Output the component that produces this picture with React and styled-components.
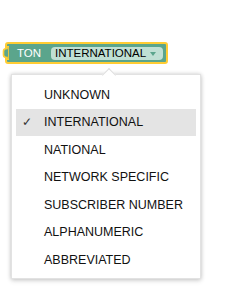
import React from 'react'
import styled, { createGlobalStyle } from 'styled-components'

const options = [
  'UNKNOWN',
  'INTERNATIONAL',
  'NATIONAL',
  'NETWORK SPECIFIC',
  'SUBSCRIBER NUMBER',
  'ALPHANUMERIC',
  'ABBREVIATED',
]

const selected = 'INTERNATIONAL'

const App = () => {
  return (
    <Page>
      <GlobalStyle />
      <Block>
        <Tab width="7" height="14" viewBox="0 0 7 14">
          <path d="M7 0.5 H5 V2.5 Q1.5 2.5 1.5 5 V9 Q1.5 11.5 5 11.5 V13.5 H7 Z" fill="#5ba58c" stroke="#ffcc33" strokeWidth="1.6" />
        </Tab>
        <Label>TON</Label>
        <Field>
          {selected}
          <FieldArrow />
        </Field>
      </Block>
      <Menu>
        <MenuArrow />
        {options.map(option => (
          <Item key={option} active={option === selected}>
            <Check>{option === selected ? '✓' : ''}</Check>
            {option}
          </Item>
        ))}
      </Menu>
    </Page>
  )
}

export default App

const GlobalStyle = createGlobalStyle`
  body {
    margin: 0;
    background: #fff;
    font-family: "Liberation Sans", Arial, sans-serif;
  }
`

const Page = styled.div`
  display: flex;
  flex-direction: column;
  align-items: flex-start;
  gap: 10px;
  padding: 42px 0 0 5px;
  width: 225px;
  height: 300px;
  box-sizing: border-box;
`

const Block = styled.div`
  position: relative;
  display: flex;
  align-items: center;
  width: 163px;
  height: 22px;
  box-sizing: border-box;
  background: #5ba58c;
  border: 2px solid #ffcc33;
  border-radius: 3px;
  padding-left: 10px;
`

const Tab = styled.svg`
  position: absolute;
  left: -5px;
  top: 2px;
`

const Label = styled.span`
  color: #fff;
  font-size: 11.5px;
  width: 34px;
`

const Field = styled.div`
  display: flex;
  align-items: center;
  height: 13px;
  width: 112px;
  box-sizing: border-box;
  padding-left: 4px;
  background: #c0e0d4;
  border-radius: 4px;
  color: #000;
  font-size: 11.5px;
`

const FieldArrow = styled.span`
  margin-left: 4px;
  width: 0;
  height: 0;
  border-left: 3.5px solid transparent;
  border-right: 3.5px solid transparent;
  border-top: 4px solid #5ba58c;
  margin-top: 1px;
`

const Menu = styled.div`
  position: relative;
  display: flex;
  flex-direction: column;
  margin-left: 6px;
  width: 190px;
  padding: 6px 4px 4.5px;
  box-sizing: border-box;
  background: #fff;
  border: 1px solid #e2e2e2;
  box-shadow: 0 0 4px rgba(0, 0, 0, 0.18), 0 2px 5px rgba(0, 0, 0, 0.12);
`

const MenuArrow = styled.div`
  position: absolute;
  top: -5px;
  left: 92px;
  width: 9px;
  height: 9px;
  background: #fff;
  border-top: 1px solid #dedede;
  border-left: 1px solid #dedede;
  transform: rotate(45deg);
`

const Item = styled.div`
  display: flex;
  align-items: center;
  height: 27.5px;
  padding-left: 6px;
  font-size: 12.5px;
  color: #111;
  background: ${({ active }) => (active ? '#e4e4e4' : 'transparent')};
`

const Check = styled.span`
  width: 22px;
  font-size: 12px;
  color: #333;
`
